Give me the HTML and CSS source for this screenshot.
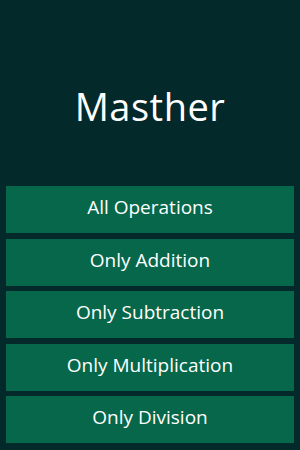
FILE: index.html
```html
<!DOCTYPE html>
<html lang="en">
<head>
    <meta charset="UTF-8">
    <meta name="viewport" content="width=device-width, initial-scale=1.0">
    <title>Masther</title>
    <link rel="stylesheet" href="styles.css">
</head>
<body>
    <div class="container">
        <div class="header">
            <div class="title">Masther</div>
        </div>

        <div class="menu">
            <button class="menu-btn">All Operations</button>
            <button class="menu-btn">Only Addition</button>
            <button class="menu-btn">Only Subtraction</button>
            <button class="menu-btn">Only Multiplication</button>
            <button class="menu-btn">Only Division</button>
        </div>
    </div>
</body>
</html>
```

FILE: styles.css
```css
* {
    margin: 0;
    padding: 0;
    box-sizing: border-box;
}

body {
    font-family: 'Open Sans', 'DejaVu Sans', sans-serif;
    background: #03292a;
    color: #ffffff;
    height: 100vh;
    overflow: hidden;
}

.container {
    height: 100vh;
    display: flex;
    flex-direction: column;
    padding: 0 6px;
}

.header {
    height: 186px;
    display: flex;
    align-items: center;
    justify-content: center;
}

.title {
    font-size: 38px;
    font-weight: 400;
    letter-spacing: 0.5px;
    margin-top: 26px;
}

.menu {
    display: flex;
    flex-direction: column;
    gap: 5.5px;
}

.menu-btn {
    height: 47px;
    padding-bottom: 5px;
    background: #06674a;
    color: #ffffff;
    border: none;
    font-family: inherit;
    font-size: 19px;
    cursor: pointer;
}
```
